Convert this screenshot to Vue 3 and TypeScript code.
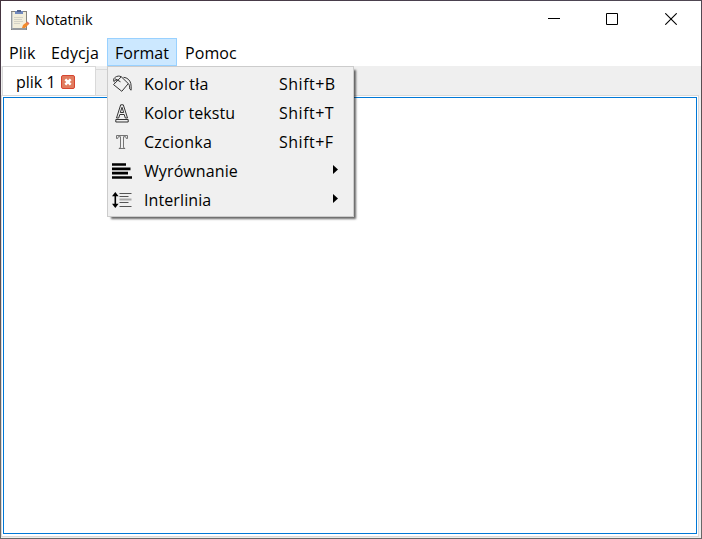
<script setup lang="ts">
import { ref } from 'vue'

interface MenuEntry {
  icon: string
  label: string
  shortcut?: string
  submenu?: boolean
}

const menus = ref(['Plik', 'Edycja', 'Format', 'Pomoc'])
const active = ref('Format')
const entries: MenuEntry[] = [
  { icon: 'bucket', label: 'Kolor tła', shortcut: 'Shift+B' },
  { icon: 'color', label: 'Kolor tekstu', shortcut: 'Shift+T' },
  { icon: 'font', label: 'Czcionka', shortcut: 'Shift+F' },
  { icon: 'align', label: 'Wyrównanie', submenu: true },
  { icon: 'spacing', label: 'Interlinia', submenu: true },
]
</script>

<template>
  <div class="desktop">
    <div class="window">
      <header class="titlebar">
        <svg class="app-icon" width="20" height="20" viewBox="0 0 20 20">
          <rect x="1" y="1" width="16" height="19" fill="#85837c" />
          <rect x="2" y="2" width="14" height="16" fill="#f2eedb" />
          <path d="M2 2v17h14" fill="none" stroke="#a5b0c1" />
          <rect x="5" y="1" width="8" height="3" fill="#7189bd" />
          <rect x="7" y="0" width="4" height="2" fill="#50618b" />
          <path d="M4 7.5h9M4 9.5h8M4 11.5h9M4 13.5h6" stroke="#d3d2c7" />
          <path d="M12 18l1-3 4-3 2 2-4 4z" fill="#f38a2b" />
          <path d="M16.5 12.5l1-1 2 2-1 1z" fill="#d97070" />
        </svg>
        <span class="title">Notatnik</span>
        <div class="controls">
          <svg width="12" height="12"><path d="M0 5.5h12" stroke="#000" shape-rendering="crispEdges" /></svg>
          <svg width="12" height="12"><path d="M.5 .5h11v11H.5z" fill="none" stroke="#000" /></svg>
          <svg width="12" height="12"><path d="M.3 .3l11.4 11.4M11.7 .3L.3 11.7" stroke="#000" stroke-width="1.1" /></svg>
        </div>
      </header>

      <nav class="menubar">
        <div v-for="m in menus" :key="m" class="menu" :class="[m.toLowerCase(), { active: m === active }]">
          <span>{{ m }}</span>
        </div>
      </nav>

      <div class="tabs">
        <div class="tab">
          <span>plik 1</span>
          <svg width="14" height="14" viewBox="0 0 14 14">
            <rect x=".5" y=".5" width="13" height="13" rx="1.5" fill="#e17c5f" stroke="#d64531" />
            <path d="M4.3 4.3l5.4 5.4M9.7 4.3L4.3 9.7" stroke="#fff" stroke-width="2.4" />
          </svg>
        </div>
        <div class="next-tab"></div>
      </div>

      <main class="pane"><div class="editor"></div></main>
    </div>

    <div class="dropdown">
      <div v-for="e in entries" :key="e.label" class="entry">
        <svg class="icon" width="20" height="20" viewBox="0 0 20 20" fill="none" stroke="#333">
          <g v-if="e.icon === 'bucket'" stroke-linejoin="round">
            <path d="M9.3 2.8L16.3 9.6 9.8 17.3 1.5 10.6z" />
            <path d="M3.2 8.3C.8 7.6 1 4.6 3.4 3.2 5 2 7.5 1.6 9.3 2.8M3.2 4.8l5.3 3M2.2 6.3l3.4-.3M11.5 3.3c3.8.3 6.5 2.8 7.3 6.2.4 2.2.5 4.2.3 6.7l-1.5-1.4c.2-2.5-.2-4-1.3-5.2" />
          </g>
          <g v-else-if="e.icon === 'color'">
            <path d="M4.5 15L8.7 1.8h2.6L15.5 15h-2.2l-1.1-3.5H7.8L6.7 15zM8.3 9.5h3.4L10 4.3z" />
            <path d="M3.8 16.5h12.4v2.5H3.8z" />
          </g>
          <g v-else-if="e.icon === 'font'" stroke="#666" stroke-width=".9">
            <path d="M4.5 3.5h11v3h-1.2l-.6-1.8h-2.2v11l1.6.8H6.9l1.6-.8v-11H6.3l-.6 1.8H4.5z" />
          </g>
          <g v-else-if="e.icon === 'align'" stroke="#000" stroke-width="2.7">
            <path d="M0 3.5h14M0 7.8h18.5M0 12.2h16M0 16.5h20" />
          </g>
          <g v-else>
            <path d="M3.3 4v12" stroke="#000" stroke-width="1.6" />
            <path d="M3.3 2L6.6 6.2H0zM3.3 18L0 13.8h6.6z" fill="#000" stroke="none" />
            <path d="M7.5 3.5h12M7.5 6.5h9M7.5 12.5h9M7.5 16.5h12" stroke="#555" />
            <path d="M7.5 9.5h12" stroke="#aaa" stroke-width="2" />
          </g>
        </svg>
        <span class="label" :class="e.icon">{{ e.label }}</span>
        <span v-if="e.shortcut" class="shortcut">{{ e.shortcut }}</span>
        <svg v-if="e.submenu" class="arrow" width="5" height="9"><path d="M0 0L5 4.5 0 9z" fill="#000" /></svg>
      </div>
    </div>
  </div>
</template>

<style>
body {
  margin: 0;
  overflow: hidden;
}
</style>

<style scoped>
.desktop {
  position: relative;
  box-sizing: border-box;
  width: 702px;
  height: 539px;
  padding: 1px;
  background: linear-gradient(165deg, #43323d, #4c4453 20%, #5a4f52 40%, #686868 60%);
  font-family: "Open Sans", "Noto Sans", sans-serif;
  font-size: 16px;
  color: #000;
}
.window {
  display: flex;
  flex-direction: column;
  height: 537px;
  background: #efefef;
}
.titlebar {
  box-sizing: border-box;
  display: flex;
  align-items: center;
  height: 37px;
  padding-left: 9px;
  background: #fff;
}
.title {
  margin-left: 5px;
  font-size: 14.5px;
  letter-spacing: -0.1px;
}
.controls {
  display: flex;
  gap: 47px;
  margin-left: auto;
  padding: 0 24px 2px 0;
}
.controls svg:first-child {
  margin-right: -1px;
}
.menubar {
  display: flex;
  height: 28px;
  background: #fff;
}
.menu {
  box-sizing: border-box;
  padding-left: 7px;
  border: 1px solid transparent;
  line-height: 29px;
  white-space: nowrap;
  letter-spacing: 0.1px;
}
.menu.plik { width: 42px; }
.menu.edycja { width: 64px; }
.menu.format { width: 70px; letter-spacing: 0; }
.menu.active {
  border-color: #99d1ff;
  background: #cce8ff;
}
.tabs {
  display: flex;
  align-items: flex-end;
  height: 29px;
}
.tab {
  box-sizing: border-box;
  display: flex;
  align-items: center;
  gap: 5px;
  width: 94px;
  height: 29px;
  margin-left: 1px;
  padding: 2px 0 0 13px;
  border: 1px solid #d9d9d9;
  border-bottom: 0;
  background: #fff;
}
.next-tab {
  width: 30px;
  height: 25px;
  border-top: 1px solid #d9d9d9;
}
.pane {
  box-sizing: border-box;
  display: flex;
  width: 698px;
  height: 442px;
  padding: 1px 1px 2px;
  border: 1px solid #d9d9d9;
  background: #fff;
}
.editor {
  flex: 1;
  border: 1px solid #0078d7;
}
.dropdown {
  position: absolute;
  left: 107px;
  top: 66px;
  box-sizing: border-box;
  width: 247px;
  height: 151px;
  padding: 2px 2px 2px 4px;
  border: 1px solid #ccc;
  background: #f0f0f0;
  box-shadow: 3px 3px 2px -1px rgba(0, 0, 0, 0.6);
}
.entry {
  display: flex;
  align-items: center;
  height: 29px;
}
.label {
  margin-left: 12px;
  letter-spacing: 0.1px;
}
.label.bucket,
.label.font {
  letter-spacing: 0.25px;
}
.shortcut {
  margin-left: auto;
  width: 72px;
  letter-spacing: 0.5px;
}
.arrow {
  margin: -3px 13px 0 auto;
}
</style>
